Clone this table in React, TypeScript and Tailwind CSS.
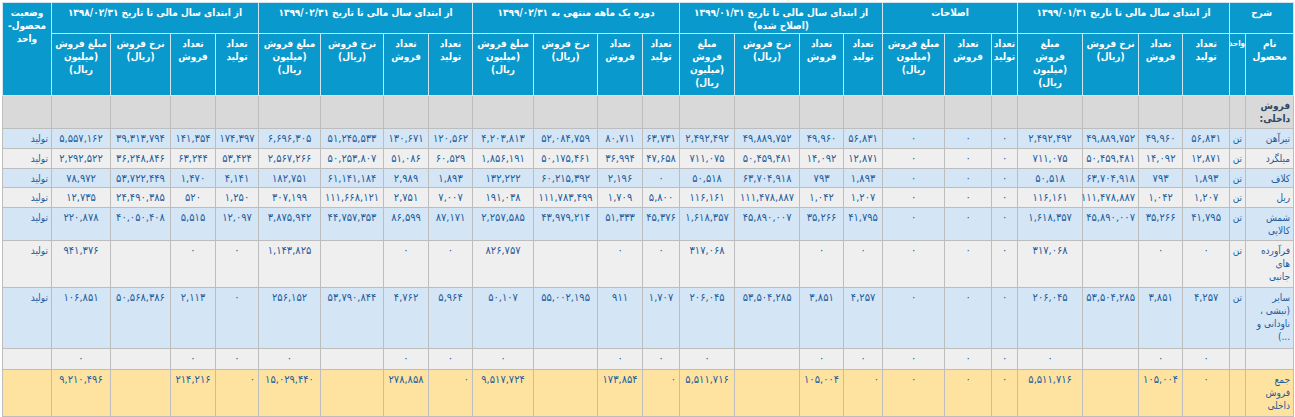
const widths = [48, 16, 47, 44, 56, 65, 26, 47, 62, 39, 44, 65, 55, 37, 45, 64, 61, 44, 45, 63, 62, 43, 45, 60, 59, 49];

type Row = { kind: 'blue' | 'gray' | 'section' | 'total'; h: string; cells: string[] };

const z = '۰';

const rows: Row[] = [
  { kind: 'section', h: 'h-[33px]', cells: ['فروش\nداخلی:', ...Array(25).fill('')] },
  {
    kind: 'blue',
    h: 'h-[20px]',
    cells: ['تیرآهن', 'تن', '۵۶,۸۳۱', '۴۹,۹۶۰', '۴۹,۸۸۹,۷۵۲', '۲,۴۹۲,۴۹۲', z, z, z, '۵۶,۸۳۱', '۴۹,۹۶۰', '۴۹,۸۸۹,۷۵۲', '۲,۴۹۲,۴۹۲', '۶۳,۷۳۱', '۸۰,۷۱۱', '۵۲,۰۸۴,۷۵۹', '۴,۲۰۳,۸۱۳', '۱۲۰,۵۶۲', '۱۳۰,۶۷۱', '۵۱,۲۴۵,۵۳۳', '۶,۶۹۶,۳۰۵', '۱۷۴,۳۹۷', '۱۴۱,۳۵۴', '۳۹,۳۱۳,۷۹۴', '۵,۵۵۷,۱۶۲', 'تولید'],
  },
  {
    kind: 'gray',
    h: 'h-[20px]',
    cells: ['میلگرد', 'تن', '۱۲,۸۷۱', '۱۴,۰۹۲', '۵۰,۴۵۹,۴۸۱', '۷۱۱,۰۷۵', z, z, z, '۱۲,۸۷۱', '۱۴,۰۹۲', '۵۰,۴۵۹,۴۸۱', '۷۱۱,۰۷۵', '۴۷,۶۵۸', '۳۶,۹۹۴', '۵۰,۱۷۵,۴۶۱', '۱,۸۵۶,۱۹۱', '۶۰,۵۲۹', '۵۱,۰۸۶', '۵۰,۲۵۳,۸۰۷', '۲,۵۶۷,۲۶۶', '۵۳,۴۲۴', '۶۳,۲۴۴', '۳۶,۲۴۸,۸۴۶', '۲,۲۹۲,۵۲۲', 'تولید'],
  },
  {
    kind: 'blue',
    h: 'h-[19px]',
    cells: ['کلاف', 'تن', '۱,۸۹۳', '۷۹۳', '۶۳,۷۰۴,۹۱۸', '۵۰,۵۱۸', z, z, z, '۱,۸۹۳', '۷۹۳', '۶۳,۷۰۴,۹۱۸', '۵۰,۵۱۸', z, '۲,۱۹۶', '۶۰,۲۱۵,۳۹۲', '۱۳۲,۲۲۲', '۱,۸۹۳', '۲,۹۸۹', '۶۱,۱۴۱,۱۸۴', '۱۸۲,۷۵۱', '۴,۱۴۱', '۱,۴۷۰', '۵۳,۷۲۲,۴۴۹', '۷۸,۹۷۲', 'تولید'],
  },
  {
    kind: 'gray',
    h: 'h-[20px]',
    cells: ['ریل', 'تن', '۱,۲۰۷', '۱,۰۴۲', '۱۱۱,۴۷۸,۸۸۷', '۱۱۶,۱۶۱', z, z, z, '۱,۲۰۷', '۱,۰۴۲', '۱۱۱,۴۷۸,۸۸۷', '۱۱۶,۱۶۱', '۵,۸۰۰', '۱,۷۰۹', '۱۱۱,۷۸۳,۴۹۹', '۱۹۱,۰۳۸', '۷,۰۰۷', '۲,۷۵۱', '۱۱۱,۶۶۸,۱۲۱', '۳۰۷,۱۹۹', '۱,۲۵۰', '۵۲۰', '۲۴,۴۹۰,۳۸۵', '۱۲,۷۳۵', 'تولید'],
  },
  {
    kind: 'blue',
    h: 'h-[33px]',
    cells: ['شمش\nکالایی', 'تن', '۴۱,۷۹۵', '۳۵,۲۶۶', '۴۵,۸۹۰,۰۰۷', '۱,۶۱۸,۳۵۷', z, z, z, '۴۱,۷۹۵', '۳۵,۲۶۶', '۴۵,۸۹۰,۰۰۷', '۱,۶۱۸,۳۵۷', '۴۵,۳۷۶', '۵۱,۳۳۳', '۴۳,۹۷۹,۲۱۴', '۲,۲۵۷,۵۸۵', '۸۷,۱۷۱', '۸۶,۵۹۹', '۴۴,۷۵۷,۳۵۳', '۳,۸۷۵,۹۴۲', '۱۲,۰۹۷', '۵,۵۱۵', '۴۰,۰۵۰,۴۰۸', '۲۲۰,۸۷۸', 'تولید'],
  },
  {
    kind: 'gray',
    h: 'h-[47px]',
    cells: ['فرآورده\nهای\nجانبی', 'تن', z, z, '', '۳۱۷,۰۶۸', z, z, z, z, z, '', '۳۱۷,۰۶۸', z, z, '', '۸۲۶,۷۵۷', z, z, '', '۱,۱۴۳,۸۲۵', z, z, '', '۹۴۱,۳۷۶', 'تولید'],
  },
  {
    kind: 'blue',
    h: 'h-[61px]',
    cells: ['سایر\n(نبشی ،\nناودانی و\n...)', 'تن', '۴,۲۵۷', '۳,۸۵۱', '۵۳,۵۰۴,۲۸۵', '۲۰۶,۰۴۵', z, z, z, '۴,۲۵۷', '۳,۸۵۱', '۵۳,۵۰۴,۲۸۵', '۲۰۶,۰۴۵', '۱,۷۰۷', '۹۱۱', '۵۵,۰۰۲,۱۹۵', '۵۰,۱۰۷', '۵,۹۶۴', '۴,۷۶۲', '۵۳,۷۹۰,۸۴۴', '۲۵۶,۱۵۲', z, '۲,۱۱۳', '۵۰,۵۶۸,۳۸۶', '۱۰۶,۸۵۱', 'تولید'],
  },
  {
    kind: 'gray',
    h: 'h-[21px]',
    cells: ['', '', z, z, '', z, z, z, z, z, z, '', z, z, z, '', z, z, z, '', z, z, z, '', z, ''],
  },
  {
    kind: 'total',
    h: 'h-[47px]',
    cells: ['جمع\nفروش\nداخلی', '', z, '۱۰۵,۰۰۴', '', '۵,۵۱۱,۷۱۶', z, z, z, z, '۱۰۵,۰۰۴', '', '۵,۵۱۱,۷۱۶', z, '۱۷۳,۸۵۴', '', '۹,۵۱۷,۷۲۴', z, '۲۷۸,۸۵۸', '', '۱۵,۰۲۹,۴۴۰', z, '۲۱۴,۲۱۶', '', '۹,۲۱۰,۴۹۶', ''],
  },
];

const rowBg: Record<Row['kind'], string> = {
  blue: 'bg-[#d4e5f5]',
  gray: 'bg-[#efefef]',
  section: 'bg-[#d9d9d9]',
  total: 'bg-[#fee3a0]',
};

const totalRightCols = [9, 13, 17, 21];

const groupTop = [
  { text: 'شرح', span: 2 },
  { text: 'از ابتدای سال مالی تا تاریخ ۱۳۹۹/۰۱/۳۱', span: 4 },
  { text: 'اصلاحات', span: 3 },
  { text: 'از ابتدای سال مالی تا تاریخ ۱۳۹۹/۰۱/۳۱\n(اصلاح شده)', span: 4 },
  { text: 'دوره یک ماهه منتهی به ۱۳۹۹/۰۲/۳۱', span: 4 },
  { text: 'از ابتدای سال مالی تا تاریخ ۱۳۹۹/۰۲/۳۱', span: 4 },
  { text: 'از ابتدای سال مالی تا تاریخ ۱۳۹۸/۰۲/۳۱', span: 4 },
];

const tp = 'تعداد\nتولید';
const tf = 'تعداد\nفروش';
const nr = 'نرخ فروش\n(ریال)';
const mb4 = 'مبلغ\nفروش\n(میلیون\nریال)';
const mb3 = 'مبلغ فروش\n(میلیون\nریال)';

const subHeads = ['نام\nمحصول', 'واحد', tp, tf, nr, mb4, tp, tf, mb3, tp, tf, nr, mb4, tp, tf, nr, mb3, tp, tf, nr, mb3, tp, tf, nr, mb3];

const th = 'border border-[#cfe6f0] bg-[#0a99cc] pt-[3px] pb-0 align-top text-center font-bold text-white whitespace-pre-line overflow-hidden';

export default function App() {
  return (
    <div className="p-[2px] bg-white" style={{ fontFamily: "'DejaVu Sans Condensed', 'DejaVu Sans', sans-serif" }}>
      <table dir="rtl" className="table-fixed border-collapse border border-[#bdbdbd] text-[10px] leading-[13px]" style={{ width: 1291 }}>
        <colgroup>
          {widths.map((w, i) => (
            <col key={i} style={{ width: w }} />
          ))}
        </colgroup>
        <thead>
          <tr className="h-[31px]">
            {groupTop.map((g, i) => (
              <th key={i} colSpan={g.span} className={`${th} px-[2px]`}>
                {g.text}
              </th>
            ))}
            <th rowSpan={2} className={`${th} px-[2px]`}>
              {'وضعیت\nمحصول-\nواحد'}
            </th>
          </tr>
          <tr className="h-[62px]">
            {subHeads.map((s, i) => (
              <th key={i} className={`${th} ${i === 1 ? 'px-0 text-[8px] tracking-[-0.4px]' : 'px-[2px]'}`}>
                {s}
              </th>
            ))}
          </tr>
        </thead>
        <tbody>
          {rows.map((r, ri) => (
            <tr key={ri} className={`${rowBg[r.kind]} ${r.h}`}>
              {r.cells.map((c, ci) => {
                let align = 'text-center';
                if (ci === 0 || ci === 25) align = 'text-right';
                if (r.kind === 'total' && totalRightCols.includes(ci)) align = 'text-right';
                const isText = ci === 0 || ci === 1 || ci === 25;
                const tone =
                  r.kind === 'section' && ci === 0
                    ? 'font-bold text-[#2b4763]'
                    : `text-[#1d5c9c] ${isText ? '' : 'text-[11px]'}`;
                return (
                  <td
                    key={ci}
                    className={`border border-[#bdbdbd] px-[3px] pt-[3px] pb-0 align-top whitespace-pre-line ${align} ${tone}`}
                  >
                    {c}
                  </td>
                );
              })}
            </tr>
          ))}
        </tbody>
      </table>
    </div>
  );
}
